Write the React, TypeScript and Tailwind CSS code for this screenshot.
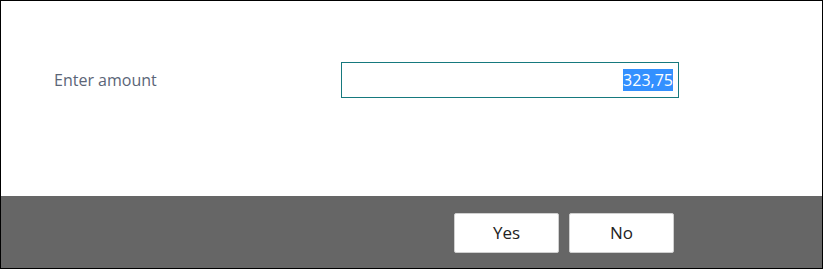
export default function App() {
  return (
    <div className="w-[823px] h-[269px] border border-black flex flex-col bg-white font-['Open_Sans',sans-serif]">
      {/* Body */}
      <div className="flex-1 pt-[61px] pl-[53px]">
        <div className="flex items-center">
          <span className="w-[287px] text-[16px] text-[#5b6577]">Enter amount</span>
          <div className="w-[338px] h-[36px] border border-[#16797e] flex items-center justify-end pr-[5px]">
            <span className="bg-[#3390ff] text-white text-[16px] leading-[22px]">323,75</span>
          </div>
        </div>
      </div>

      {/* Footer */}
      <div className="h-[72px] bg-[#666666] flex justify-end items-start pt-[17px] pr-[148px] gap-[10px]">
        <button className="w-[105px] h-[40px] bg-white border border-[#d0d0d0] rounded-[2px] text-[17px] text-[#222]">
          Yes
        </button>
        <button className="w-[105px] h-[40px] bg-white border border-[#d0d0d0] rounded-[2px] text-[17px] text-[#222]">
          No
        </button>
      </div>
    </div>
  );
}
